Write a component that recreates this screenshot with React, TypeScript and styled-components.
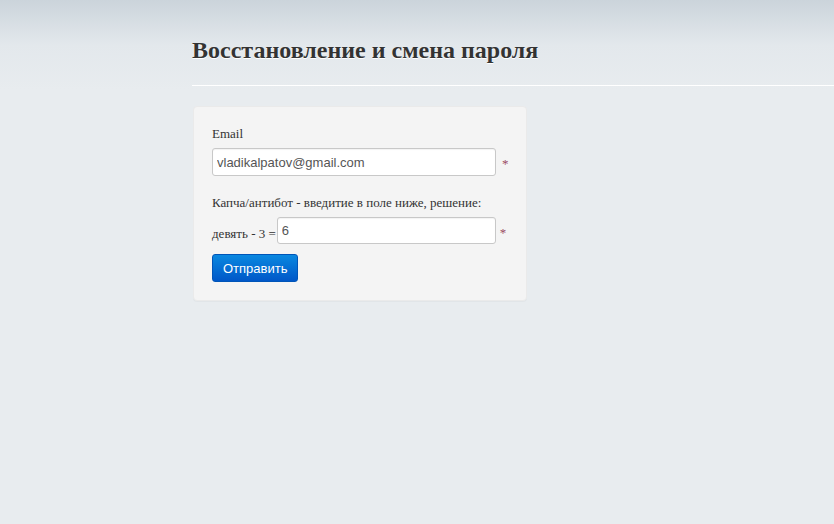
import React from "react";
import styled, { createGlobalStyle } from "styled-components";

const Global = createGlobalStyle`
  html, body { margin: 0; padding: 0; }
  body {
    min-height: 524px;
    background: linear-gradient(to bottom, #cbd4db 0px, #e3e8ec 45px, #e8ecef 90px, #e8ecef 100%);
    font-family: "Liberation Serif", "Times New Roman", serif;
    color: #333;
  }
`;

const Page = styled.div`
  padding-left: 192px;
  padding-top: 35px;
`;

const Title = styled.h1`
  margin: 0;
  font-family: "Liberation Serif", "Times New Roman", serif;
  font-size: 24px;
  font-weight: bold;
  line-height: 30px;
  color: #333;
  text-shadow: 0 1px 0 #fff;
`;

const Divider = styled.div`
  margin-top: 20px;
  height: 1px;
  background: #fff;
`;

const Panel = styled.form`
  margin-top: 20px;
  width: 295px;
  margin-left: 1px;
  padding: 18px 19px 18px 18px;
  background: #f4f4f4;
  border: 1px solid #eaeaea;
  border-radius: 4px;
  box-shadow: 0 1px 1px rgba(0, 0, 0, 0.03);
`;

const Label = styled.div`
  font-size: 13px;
  line-height: 18px;
  color: #333;
  white-space: nowrap;
`;

const Row = styled.div<{ $mt?: number }>`
  display: flex;
  align-items: center;
  margin-top: ${(p) => p.$mt ?? 0}px;
`;

const Input = styled.input<{ $w: number; $h: number }>`
  box-sizing: border-box;
  flex: none;
  width: ${(p) => p.$w}px;
  height: ${(p) => p.$h}px;
  padding: 4px 4px;
  border: 1px solid #c8c8c8;
  border-radius: 3px;
  background: #fff;
  font-family: "Liberation Sans", Arial, sans-serif;
  font-size: 13px;
  color: #555;
  box-shadow: inset 0 1px 1px rgba(0, 0, 0, 0.05);
  outline: none;
`;

const Req = styled.span<{ $ml: number }>`
  margin-left: ${(p) => p.$ml}px;
  color: #9b4a63;
  font-size: 13px;
  line-height: 1;
  padding-top: 3px;
`;

const Math = styled.span`
  flex: none;
  white-space: nowrap;
  font-size: 13px;
  margin-right: 1px;
  padding-top: 7px;
`;

const Button = styled.button`
  display: block;
  margin-top: 10px;
  height: 28px;
  padding: 0 10px;
  border: 1px solid #0055b8;
  border-radius: 3px;
  background: linear-gradient(to bottom, #0a88e0, #0057c8);
  color: #fff;
  font-family: "Liberation Sans", Arial, sans-serif;
  font-size: 13px;
  cursor: pointer;
`;

export default function App() {
  return (
    <>
      <Global />
      <Page>
        <Title>Восстановление и смена пароля</Title>
        <Divider />
        <Panel onSubmit={(e) => e.preventDefault()}>
          <Label>Email</Label>
          <Row $mt={5}>
            <Input $w={284} $h={28} defaultValue="vladikalpatov@gmail.com" />
            <Req $ml={6}>*</Req>
          </Row>
          <Row $mt={18}>
            <Label>Капча/антибот - введитие в поле ниже, решение:</Label>
          </Row>
          <Row $mt={5}>
            <Math>девять - 3 =</Math>
            <Input $w={219} $h={27} defaultValue="6" />
            <Req $ml={4}>*</Req>
          </Row>
          <Button type="submit">Отправить</Button>
        </Panel>
      </Page>
    </>
  );
}
